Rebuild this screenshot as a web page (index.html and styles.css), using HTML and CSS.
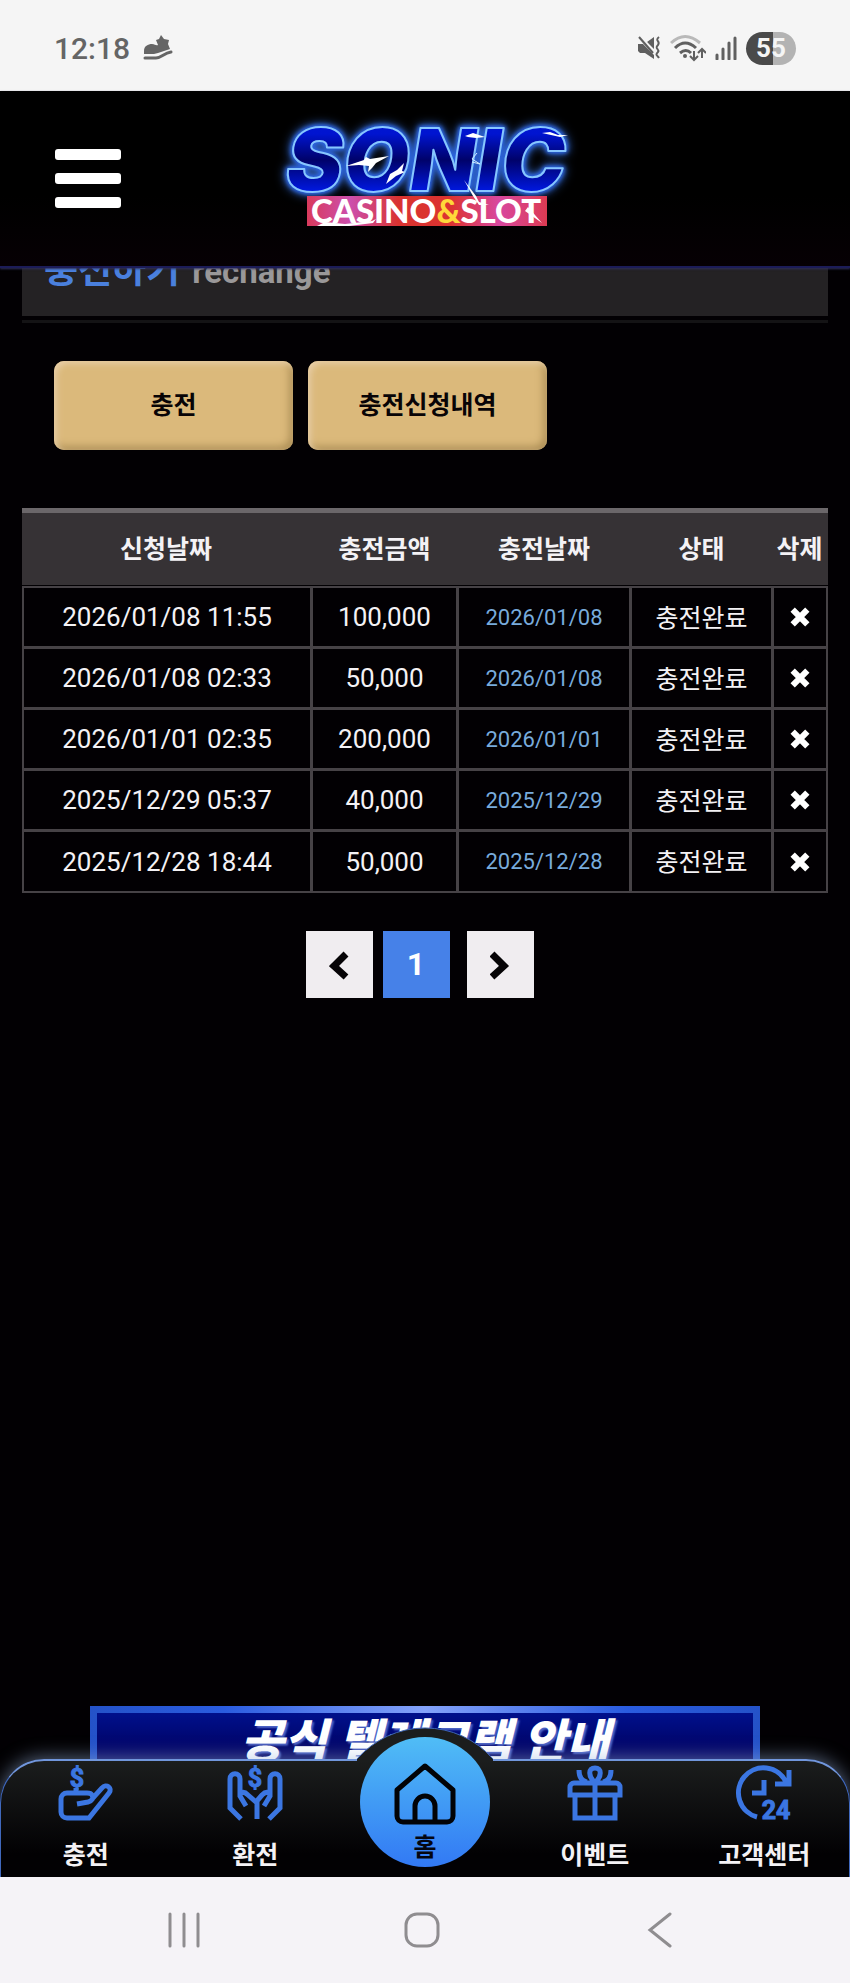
FILE: index.html
```html
<!DOCTYPE html>
<html lang="ko">
<head>
  <meta charset="UTF-8">
  <meta name="viewport" content="width=device-width, initial-scale=1">
  <title>충전하기</title>
  <link rel="stylesheet" href="styles.css">
</head>
<body>
  <div class="status-bar">
    <div class="status-left">
      <span class="clock">12:18</span>
      <svg class="shoe" viewBox="0 0 30 26" width="30" height="26">
        <path d="M1 16c0-5 4-7 8-7 3 0 4 2 6 1l-2-5 3-1 2-4 3 4 5 1-1 4 2 5-12 4-4 1-10 0z" fill="#656565"/>
        <path d="M2 23h11c5 0 8-5 15-6" fill="none" stroke="#656565" stroke-width="3" stroke-linecap="round"/>
      </svg>
    </div>
    <div class="status-right">
      <svg viewBox="0 0 24 26" width="24" height="26">
        <path d="M1 9h5l11 11v4L8 18H3l-2-2zM10 7l7-5v12z" fill="#5f5f5f"/>
        <path d="M3 1l17 19" stroke="#f5f5f5" stroke-width="2"/>
        <path d="M2 2l14 16" stroke="#5f5f5f" stroke-width="2"/>
        <path d="M22 2c-5 4 2 4-1 8-4 4 2 4 0 7-3 3-1 3 1 6" fill="none" stroke="#5f5f5f" stroke-width="2"/>
      </svg>
      <svg viewBox="0 0 36 28" width="36" height="28">
        <g fill="none" stroke="#606060" stroke-width="3">
          <path d="M1 9q14-13 29 0" stroke="#b9b9b9"/>
          <path d="M5 14q10-10 21 0M10 19q6-5 11 0"/>
          <path d="M24 17v9M20 22l4 4 4-4M32 24V15M28 19l4-4 4 4" stroke-width="2"/>
        </g>
        <circle cx="15" cy="22" r="2" fill="#606060"/>
      </svg>
      <svg viewBox="0 0 22 24" width="22" height="24">
        <path d="M2 19v4M8 13v10M14 7v16M20 2v21" stroke="#606060" stroke-width="3" stroke-linecap="round"/>
      </svg>
      <span class="battery">55</span>
    </div>
  </div>

  <header class="top">
    <button class="menu-btn" type="button" aria-label="메뉴">
      <span></span><span></span><span></span>
    </button>
    <a class="logo" href="#">
      <svg viewBox="0 0 310 136" width="310" height="136">
        <defs>
          <linearGradient id="sonic" x1="0" y1="0" x2="0" y2="1">
            <stop offset="0" stop-color="#0018d8"/>
            <stop offset=".25" stop-color="#0014d0"/>
            <stop offset=".5" stop-color="#00026a"/>
            <stop offset=".8" stop-color="#0018e0"/>
          </linearGradient>
          <linearGradient id="bar">
            <stop offset="0" stop-color="#d93a5c"/>
            <stop offset=".18" stop-color="#cc4fae"/>
            <stop offset=".38" stop-color="#d93330"/>
            <stop offset=".6" stop-color="#dc3330"/>
            <stop offset=".8" stop-color="#d848a0"/>
            <stop offset="1" stop-color="#dc3a52"/>
          </linearGradient>
        </defs>
        <text class="logo-main" x="16" y="80">SONIC</text>
        <rect x="37" y="85" width="240" height="30" fill="url(#bar)"/>
        <text class="logo-sub" x="41" y="112">CASINO<tspan fill="#ffd83a">&amp;</tspan>SLOT</text>
        <g fill="#fff">
          <path d="M76 55l18-6 2-3 4 2 19-3-13 7-4 5-4 4 1-6-10-1z"/>
          <path d="M116 73l4-10 7-4 7-7-2 8 3 1-9 4z"/>
          <path d="M195 25l8-3 12 4-9 1-8-1zM272 22l8-1 8 3h10l-8 2z"/>
          <path d="M194 69l12 16 3 6 10 3-10 0-6-9z"/>
          <path d="M258 96l14 16-17-12zM47 115l8-4 20 2 27-3 4-2-3 4-24 3z"/>
        </g>
        <path d="M207 42l-5 6 8 5-8-2" fill="none" stroke="#cfeaff" stroke-width="1"/>
      </svg>
    </a>
  </header>

  <main class="content">
    <h1 class="page-title">충전하기 <span>rechange</span></h1>

    <div class="tabs">
      <button type="button">충전</button>
      <button type="button">충전신청내역</button>
    </div>

    <table class="history">
      <colgroup>
        <col class="col-date"><col class="col-amount"><col class="col-done"><col class="col-state"><col class="col-del">
      </colgroup>
      <thead>
        <tr><th>신청날짜</th><th>충전금액</th><th>충전날짜</th><th>상태</th><th>삭제</th></tr>
      </thead>
      <tbody>
        <tr>
          <td>2026/01/08 11:55</td><td>100,000</td><td class="done">2026/01/08</td><td class="state">충전완료</td>
          <td><button class="del" type="button" aria-label="삭제"><svg viewBox="0 0 18 18" width="22" height="22"><path d="M3 3l12 12M15 3L3 15"/></svg></button></td>
        </tr>
        <tr>
          <td>2026/01/08 02:33</td><td>50,000</td><td class="done">2026/01/08</td><td class="state">충전완료</td>
          <td><button class="del" type="button" aria-label="삭제"><svg viewBox="0 0 18 18" width="22" height="22"><path d="M3 3l12 12M15 3L3 15"/></svg></button></td>
        </tr>
        <tr>
          <td>2026/01/01 02:35</td><td>200,000</td><td class="done">2026/01/01</td><td class="state">충전완료</td>
          <td><button class="del" type="button" aria-label="삭제"><svg viewBox="0 0 18 18" width="22" height="22"><path d="M3 3l12 12M15 3L3 15"/></svg></button></td>
        </tr>
        <tr>
          <td>2025/12/29 05:37</td><td>40,000</td><td class="done">2025/12/29</td><td class="state">충전완료</td>
          <td><button class="del" type="button" aria-label="삭제"><svg viewBox="0 0 18 18" width="22" height="22"><path d="M3 3l12 12M15 3L3 15"/></svg></button></td>
        </tr>
        <tr>
          <td>2025/12/28 18:44</td><td>50,000</td><td class="done">2025/12/28</td><td class="state">충전완료</td>
          <td><button class="del" type="button" aria-label="삭제"><svg viewBox="0 0 18 18" width="22" height="22"><path d="M3 3l12 12M15 3L3 15"/></svg></button></td>
        </tr>
      </tbody>
    </table>

    <div class="paging">
      <a href="#" aria-label="이전"><svg viewBox="0 0 20 30" width="20" height="30"><path d="M17 4L5 16l12 11"/></svg></a>
      <a href="#" class="on">1</a>
      <a href="#" aria-label="다음"><svg viewBox="0 0 20 30" width="20" height="30"><path d="M2 4l12 12L2 27"/></svg></a>
    </div>

    <a class="banner" href="#">공식 텔레그램 안내</a>
  </main>

  <nav class="bottom-nav">
    <svg class="bump" viewBox="0 0 140 36" width="140" height="36">
      <path d="M2 33A90 90 0 0 1 138 33V36H2z" fill="#1b1d1d"/>
      <path d="M2 33A90 90 0 0 1 138 33" fill="none" stroke="#3d65b5" stroke-width="1"/>
    </svg>
    <a href="#">
      <svg class="icon" viewBox="0 0 54 54" width="54" height="54">
        <text x="18" y="21" text-anchor="middle">$</text>
        <path d="M17 22v5M18 38l11-2c4-1 6-4 4-7-1-2-3-2-5-2H8a6 6 0 0 0-6 6v13a6 6 0 0 0 6 6h22l20-25c4-5-3-10-7-5L33 33"/>
      </svg>
      <span>충전</span>
    </a>
    <a href="#">
      <svg class="icon" viewBox="0 0 54 54" width="54" height="54">
        <text x="27" y="21" text-anchor="middle">$</text>
        <path d="M13 53L2 42V13c0-7 10-7 10 0v17l6 10M12 28c3-3 6-1 8 1l9 8v16M41 53l11-11V13c0-7-10-7-10 0v17l-6 10M42 28c-3-3-6-1-8 1l-6 7"/>
      </svg>
      <span>환전</span>
    </a>
    <a href="#" class="home">
      <svg viewBox="0 0 62 62" width="62" height="62">
        <path d="M31 3L3 27v26a6 6 0 0 0 6 6h44a6 6 0 0 0 6-6V27zM21 59V43a10 10 0 0 1 20 0v16"/>
      </svg>
      <span>홈</span>
    </a>
    <a href="#">
      <svg class="icon" viewBox="0 0 54 54" width="54" height="54">
        <path d="M2 29v-8a4 4 0 0 1 4-4h42a4 4 0 0 1 4 4v8zM7 29v23h40V29M27 17v35M27 17c-7-7-7-15 0-15s7 8 0 15M11 4c0 7 3 11 8 12M43 4c0 7-3 11-8 12"/>
      </svg>
      <span>이벤트</span>
    </a>
    <a href="#">
      <svg class="icon" viewBox="0 0 54 54" width="54" height="54">
        <path d="M20 51A25 25 0 1 1 49 16M52 4v14H38M27 14v13H15"/>
        <text x="39" y="53" text-anchor="middle">24</text>
      </svg>
      <span>고객센터</span>
    </a>
  </nav>

  <div class="system-nav">
    <button type="button" aria-label="최근 앱"><svg viewBox="0 0 36 36" width="36" height="36"><path d="M4 2v32M18 2v32M32 2v32"/></svg></button>
    <button type="button" aria-label="홈 화면"><svg viewBox="0 0 36 36" width="36" height="36"><rect x="2" y="2" width="32" height="32" rx="11"/></svg></button>
    <button type="button" aria-label="뒤로"><svg viewBox="0 0 36 36" width="36" height="36"><path d="M28 2L8 18l20 16"/></svg></button>
  </div>
</body>
</html>
```

FILE: styles.css
```css
* {
  box-sizing: border-box;
}

body {
  margin: 0;
  min-height: 100vh;
  display: flex;
  flex-direction: column;
  background: #020003;
  color: #f4f2f5;
  font-family: Roboto, 'Noto Sans CJK KR', sans-serif;
  font-size: 25px;
}

a {
  color: inherit;
  text-decoration: none;
}

button {
  font-family: inherit;
  border: 0;
  padding: 0;
  background: none;
  cursor: pointer;
}

svg {
  display: block;
}

/* 상태바 */
.status-bar {
  height: 91px;
  padding: 5px 54px 0;
  display: flex;
  justify-content: space-between;
  align-items: center;
  background: #f5f5f5;
}

.status-left {
  display: flex;
  align-items: center;
  gap: 13px;
}

.clock {
  font-size: 30px;
  font-weight: 500;
  color: #656565;
}

.status-right {
  display: flex;
  align-items: center;
  gap: 9px;
}

.battery {
  width: 50px;
  height: 33px;
  border-radius: 17px;
  background: linear-gradient(90deg, #4a4a4a 55%, #b3b3b3 55%);
  color: #f5f5f5;
  font-size: 26px;
  font-weight: 700;
  line-height: 33px;
  text-align: center;
}

/* 헤더 */
.top {
  position: relative;
  z-index: 1;
  height: 177px;
  padding-left: 55px;
  padding-right: 55px;
  display: grid;
  grid-template-columns: 1fr auto 1fr;
  align-items: center;
  background: linear-gradient(#000, #000 60%, #060004);
  border-bottom: 2px solid #1c1c58;
  box-shadow: 0 1px 2px #30305c;
}

.menu-btn {
  width: 66px;
  display: flex;
  flex-direction: column;
  gap: 13px;
}

.menu-btn span {
  height: 11px;
  border-radius: 3px;
  background: #fff;
}

.logo svg {
  overflow: visible;
}

.logo-main {
  font-family: Inter, sans-serif;
  font-size: 86px;
  font-weight: 900;
  font-style: italic;
  fill: url(#sonic);
  stroke: #86c6ff;
  stroke-width: 2;
  stroke-linejoin: round;
  filter: drop-shadow(0 0 2px #2a62e0) drop-shadow(0 0 2px #2a62e0) drop-shadow(0 0 5px #3468c8);
}

.logo-sub {
  font-family: Lato, sans-serif;
  font-size: 33px;
  font-weight: 900;
  fill: #fff;
}

/* 본문 */
.content {
  flex: 1;
  padding: 0 22px;
  display: flex;
  flex-direction: column;
}

.page-title {
  margin: -42px 0 4px;
  height: 90px;
  padding-left: 22px;
  background: #242224;
  color: #4a80dd;
  font-size: 37px;
  font-weight: 700;
  line-height: 90px;
}

.page-title span {
  margin-left: 3px;
  color: #9a9899;
  font-size: 33px;
}

.tabs {
  display: flex;
  gap: 15px;
  padding: 38px 32px 58px;
  border-top: 3px solid #141315;
}

.tabs button {
  width: 239px;
  height: 89px;
  padding-bottom: 6px;
  border-radius: 10px;
  background: #dbb97b;
  box-shadow: inset 3px 3px 6px #e9cfa8, inset -3px -3px 8px #a88a52;
  color: #080406;
  font-size: 25px;
  font-weight: 700;
}

.history {
  width: 100%;
  table-layout: fixed;
  border-spacing: 0;
  text-align: center;
}

.col-date { width: 291px; }
.col-amount { width: 146px; }
.col-done { width: 173px; }
.col-state { width: 142px; }
.col-del { width: 54px; }

.history th {
  height: 78px;
  padding: 0 3px 4px 0;
  background: #363235;
  border-top: 5px solid #6b676a;
  border-bottom: 1px solid #020003;
  font-weight: 700;
  white-space: nowrap;
}

.history td {
  height: 61px;
  padding: 0;
  border: 0 solid #464246;
  border-right-width: 3px;
  border-bottom-width: 3px;
  font-size: 26px;
}

.history td:first-child {
  border-left-width: 2px;
}

.history td:last-child {
  border-right-width: 2px;
}

.history tbody tr:first-child td {
  height: 63px;
  border-top-width: 2px;
}

.history tbody tr:last-child td {
  border-bottom-width: 2px;
}

.history td.done {
  color: #78abdc;
  font-size: 22px;
}

.history td.state {
  padding-bottom: 3px;
  font-size: 25px;
}

.del {
  display: block;
  margin: 0 auto;
}

.del svg {
  stroke: #fff;
  stroke-width: 5;
}

.paging {
  margin: 38px 11px 0 0;
  display: flex;
  justify-content: center;
}

.paging a {
  width: 67px;
  height: 67px;
  display: flex;
  align-items: center;
  justify-content: center;
  background: #f0edf0;
}

.paging a.on {
  margin: 0 17px 0 10px;
  padding-bottom: 2px;
  background: #4681e8;
  color: #fff;
  font-size: 32px;
  font-weight: 700;
}

.paging path {
  fill: none;
  stroke: #060406;
  stroke-width: 7;
}

.banner {
  margin: auto 68px 0;
  height: 53px;
  overflow: hidden;
  border: 7px solid #2452c8;
  border-bottom: 0;
  border-image: linear-gradient(90deg, #2452c8, #2a5ce0 20%, #84a2fa 50%, #2a5ce0 80%, #2452c8) 7;
  background: linear-gradient(#00108c, #00005c);
  color: #fff;
  font-size: 47px;
  font-weight: 900;
  font-style: italic;
  line-height: 58px;
  text-align: center;
  text-shadow: 2px 2px 2px #5068c8;
}

/* 하단 메뉴 */
.bottom-nav {
  position: relative;
  height: 118px;
  display: flex;
  border: 1px solid #4068bc;
  border-top: 2px solid #7196dc;
  border-bottom: 0;
  border-radius: 44px 44px 0 0;
  background: linear-gradient(#1b1d1d, #020103 80%);
  box-shadow: 0 -2px 18px #9ab4dc88;
}

.bottom-nav a {
  flex: 1;
  padding-top: 5px;
  display: flex;
  flex-direction: column;
  align-items: center;
  gap: 18px;
  position: relative;
  font-weight: 700;
  line-height: 36px;
}

.bump {
  position: absolute;
  left: 50%;
  top: -35px;
  transform: translateX(-50%);
}

.icon {
  overflow: visible;
}

.icon path {
  fill: none;
  stroke: #3b76e2;
  stroke-width: 5;
}

.icon text {
  fill: #3b76e2;
  stroke: #3b76e2;
  font-size: 25px;
  font-weight: 700;
}

/* 홈 버튼은 메뉴 위로 올라온다 */
.bottom-nav .home {
  flex: none;
  width: 130px;
  height: 130px;
  margin: -24px 20px 0;
  padding-top: 26px;
  gap: 5px;
  border-radius: 50%;
  background: linear-gradient(#50bdf6, #3279f4);
  color: #040610;
}

.home path {
  fill: none;
  stroke: #020306;
  stroke-width: 5;
  stroke-linejoin: round;
}

/* 시스템 버튼 */
.system-nav {
  position: relative;
  height: 106px;
  padding: 0 71px 0 65px;
  display: flex;
  background: #f5f3f7;
}

.system-nav button {
  flex: 1;
  display: flex;
  align-items: center;
  justify-content: center;
}

.system-nav svg {
  fill: none;
  stroke: #8f8d90;
  stroke-width: 3;
  stroke-linecap: round;
}
```
